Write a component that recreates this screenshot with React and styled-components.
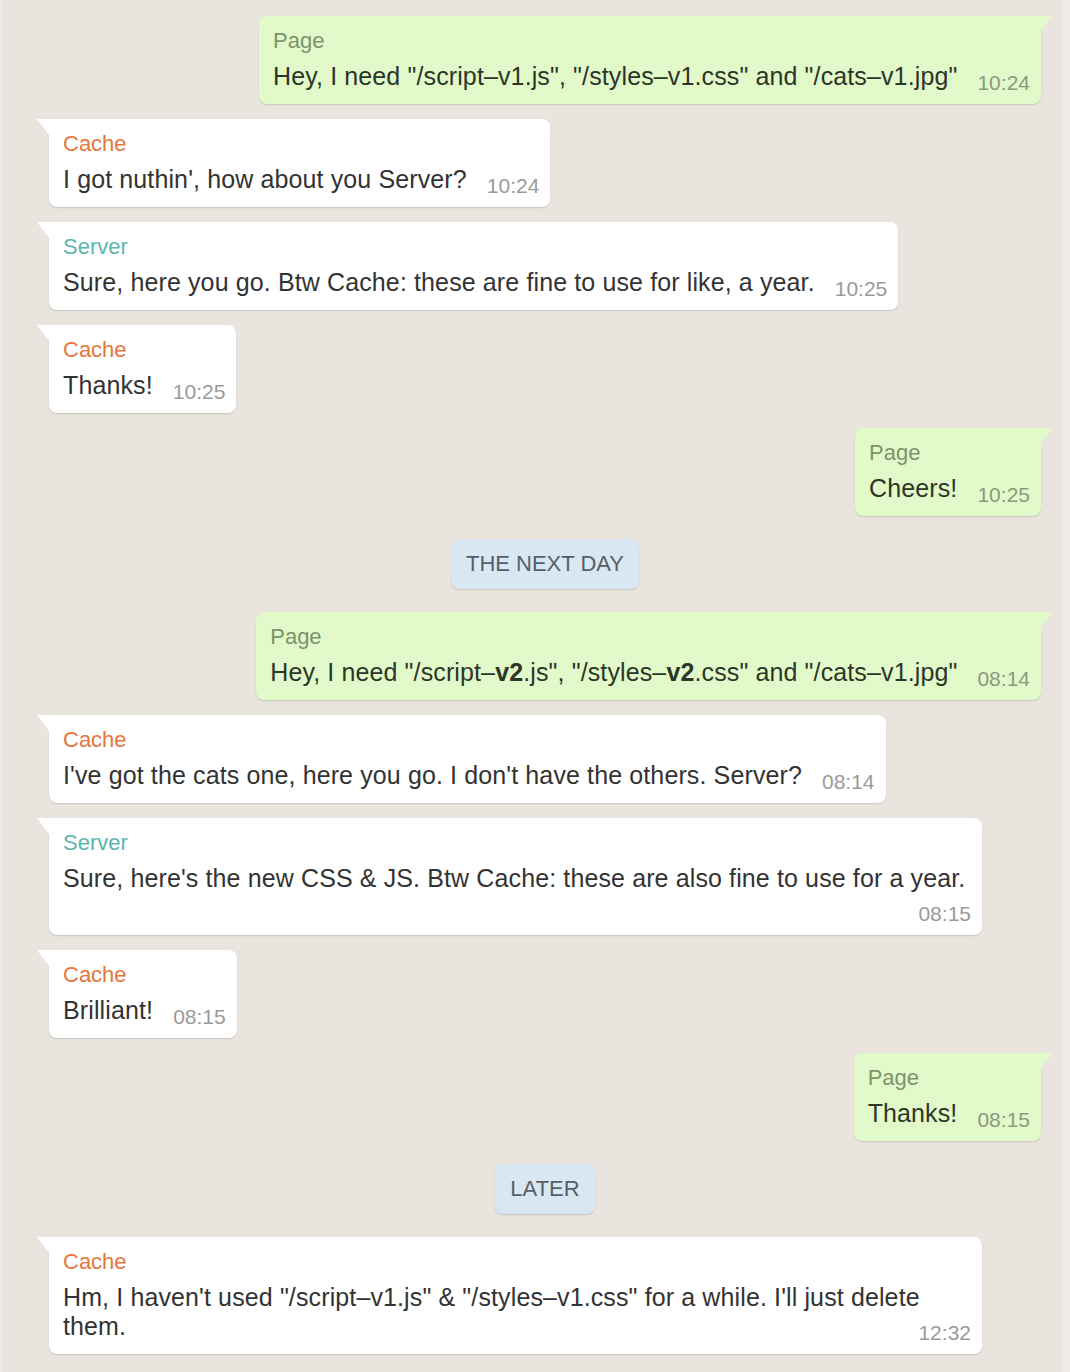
import React from 'react'
import styled, { createGlobalStyle } from 'styled-components'

const GlobalStyle = createGlobalStyle`
  html, body {
    margin: 0;
    padding: 0;
    background: #efebe7;
  }
  body {
    font-family: "Liberation Sans", Arial, Helvetica, sans-serif;
  }
`;

const messages = [
  { kind: 'msg', from: 'page', time: '10:24', text: <>Hey, I need "/script–v1.js", "/styles–v1.css" and "/cats–v1.jpg"</> },
  { kind: 'msg', from: 'cache', time: '10:24', text: <>I got nuthin', how about you Server?</> },
  { kind: 'msg', from: 'server', time: '10:25', text: <>Sure, here you go. Btw Cache: these are fine to use for like, a year.</> },
  { kind: 'msg', from: 'cache', time: '10:25', text: <>Thanks!</> },
  { kind: 'msg', from: 'page', time: '10:25', text: <>Cheers!</> },
  { kind: 'day', label: 'The next day' },
  { kind: 'msg', from: 'page', time: '08:14', text: <>Hey, I need "/script–<b>v2</b>.js", "/styles–<b>v2</b>.css" and "/cats–v1.jpg"</> },
  { kind: 'msg', from: 'cache', time: '08:14', text: <>I've got the cats one, here you go. I don't have the others. Server?</> },
  { kind: 'msg', from: 'server', time: '08:15', text: <>Sure, here's the new CSS &amp; JS. Btw Cache: these are also fine to use for a year.</> },
  { kind: 'msg', from: 'cache', time: '08:15', text: <>Brilliant!</> },
  { kind: 'msg', from: 'page', time: '08:15', text: <>Thanks!</> },
  { kind: 'day', label: 'Later' },
  { kind: 'msg', from: 'cache', time: '12:32', text: <>Hm, I haven't used "/script–v1.js" &amp; "/styles–v1.css" for a while. I'll just delete them.</> },
];

const senders = {
  page: { name: 'Page', color: '#7c9469' },
  cache: { name: 'Cache', color: '#e6763a' },
  server: { name: 'Server', color: '#5db5ad' },
};

const Chat = styled.div`
  margin: 0 8px 0 2px;
  min-height: 1372px;
  box-sizing: border-box;
  padding: 16px 21px 18px 47px;
  background: #e9e4de;
  display: flex;
  flex-direction: column;
  gap: 15px;
`;

const Bubble = styled.div`
  position: relative;
  align-self: ${({ $mine }) => ($mine ? 'flex-end' : 'flex-start')};
  max-width: 933px;
  box-sizing: border-box;
  padding: 11px 11px 11px 14px;
  background: ${({ $mine }) => ($mine ? '#e2fac9' : '#ffffff')};
  color: ${({ $mine }) => ($mine ? '#2c3627' : '#333333')};
  border-radius: 8px;
  border-top-left-radius: ${({ $mine }) => ($mine ? '8px' : '0')};
  border-top-right-radius: ${({ $mine }) => ($mine ? '0' : '8px')};
  box-shadow: 0 1px 1.5px rgba(0, 0, 0, 0.14);

  &::before {
    content: "";
    position: absolute;
    top: 0;
    width: 12px;
    height: 16px;
    background: inherit;
    ${({ $mine }) =>
      $mine
        ? `right: -11px; clip-path: polygon(0 0, 100% 0, 0 100%);`
        : `left: -12px; clip-path: polygon(0 0, 100% 0, 100% 100%);`}
  }
`;

const Sender = styled.div`
  font-size: 22px;
  line-height: 28px;
  margin-bottom: 7px;
  color: ${({ $color }) => $color};
`;

const Body = styled.div`
  font-size: 25px;
  line-height: 29px;
  letter-spacing: 0.12px;

  b {
    font-weight: bold;
  }
`;

const Time = styled.span`
  float: right;
  margin: 10px 0 0 20px;
  font-size: 21px;
  line-height: 21px;
  letter-spacing: 0;
  color: ${({ $mine }) => ($mine ? '#899a7d' : '#9a9a9a')};
`;

const DayMarker = styled.div`
  align-self: center;
  margin: 8px 0;
  padding: 13px 15px;
  font-size: 22px;
  line-height: 24px;
  text-transform: uppercase;
  color: #555f69;
  background: #d8e7f2;
  border-radius: 8px;
  box-shadow: 0 1px 1.5px rgba(0, 0, 0, 0.14);
`;

const Message = ({ from, time, text }) => {
  const mine = from === 'page';
  const sender = senders[from];
  return (
    <Bubble $mine={mine}>
      <Sender $color={sender.color}>{sender.name}</Sender>
      <Body>
        {text}
        <Time $mine={mine}>{time}</Time>
      </Body>
    </Bubble>
  );
};

const App = () => {
  return (
    <>
      <GlobalStyle />
      <Chat>
        {messages.map((m, i) =>
          m.kind === 'day' ? (
            <DayMarker key={i}>{m.label}</DayMarker>
          ) : (
            <Message key={i} {...m} />
          )
        )}
      </Chat>
    </>
  );
};

export default App;
